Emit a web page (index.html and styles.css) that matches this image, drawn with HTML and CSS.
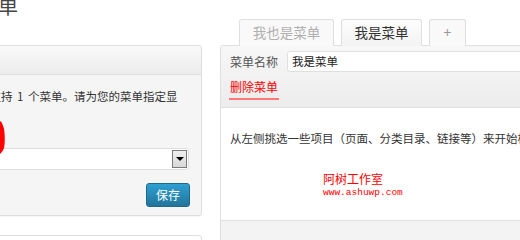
FILE: index.html
```html
<!DOCTYPE html>
<html lang="zh">
<head>
<meta charset="utf-8">
<link rel="stylesheet" href="styles.css">
</head>
<body>
<div class="wrap">
  <div class="left">
    <h1 class="title">编辑菜单</h1>
    <div class="panel">
      <div class="panel-head"></div>
      <div class="panel-body">
        <p class="desc">您的主题支持 <span class="num">1</span> 个菜单。请为您的菜单指定显</p>
        <div class="select"><span class="arrow"></span></div>
        <div class="actions"><button class="save">保存</button></div>
      </div>
    </div>
    <div class="panel next"></div>
  </div>
  <div class="right">
    <div class="tabs">
      <span class="tab">我也是菜单</span>
      <span class="tab active">我是菜单</span>
      <span class="tab plus">+</span>
    </div>
    <div class="menu">
      <div class="menu-head">
        <div class="name-row">
          <label class="name-label">菜单名称</label>
          <div class="name-input">我是菜单</div>
        </div>
        <a class="delete">删除菜单</a>
      </div>
      <div class="menu-body">
        <p class="hint">从左侧挑选一些项目（页面、分类目录、链接等）来开始构建您的自定义菜单。</p>
        <div class="mark">
          <div class="mark-name">阿树工作室</div>
          <div class="mark-url">www.ashuwp.com</div>
        </div>
      </div>
      <div class="menu-foot"></div>
    </div>
  </div>
</div>
<svg class="scribble" width="8" height="40" viewBox="0 0 8 40"><path d="M0 2 C2 3 3 6 4 10 C5 16 5 24 4 29 C3 32 1 34 0 35 Z" fill="#ff0000"/></svg>
</body>
</html>
```
FILE: styles.css
```css
html, body {
  margin: 0;
  padding: 0;
}
body {
  width: 520px;
  height: 240px;
  overflow: hidden;
  background: #fff;
  font-family: "Noto Sans CJK SC", "Noto Sans", sans-serif;
  color: #333;
  position: relative;
}
.wrap {
  display: flex;
  align-items: flex-start;
  gap: 18px;
  margin-left: -70px;
  width: 800px;
}
.left {
  width: 272px;
  flex: none;
}
.title {
  margin: -6px 0 27px 8px;
  height: 24px;
  font-size: 20px;
  line-height: 24px;
  font-weight: normal;
  color: #464646;
  white-space: nowrap;
}
.panel {
  border: 1px solid #dfdfdf;
  border-radius: 3px;
  background: #f5f5f5;
  box-shadow: 0 1px 1px rgba(0,0,0,0.04);
}
.panel-head {
  height: 28px;
  border-bottom: 1px solid #dfdfdf;
  background: linear-gradient(#f9f9f9, #ececec);
  border-radius: 3px 3px 0 0;
}
.panel-body {
  padding: 11px 12px 8px 12.5px;
}
.desc {
  margin: 0;
  font-size: 11.5px;
  line-height: 20px;
  white-space: nowrap;
  color: #333;
  overflow: hidden;
}
.num {
  padding: 0 2px;
}
.select {
  margin-top: 42px;
  height: 22px;
  box-sizing: border-box;
  border: 1px solid #dfdfdf;
  border-radius: 3px;
  background: #fff;
  display: flex;
  justify-content: flex-end;
  align-items: center;
  padding-right: 1px;
}
.arrow {
  width: 15px;
  height: 18px;
  box-sizing: border-box;
  border: 1px solid #7a7a7a;
  background: linear-gradient(#f0f0f0, #d8d8d8);
  display: flex;
  align-items: center;
  justify-content: center;
}
.arrow::after {
  content: "";
  border-left: 4px solid transparent;
  border-right: 4px solid transparent;
  border-top: 4px solid #000;
}
.actions {
  display: flex;
  justify-content: flex-end;
  margin-top: 13px;
}
.save {
  width: 44px;
  height: 24px;
  border: 1px solid #1e6a8d;
  border-radius: 3px;
  background: linear-gradient(#2e9fd2, #21759b);
  color: #fff;
  font-family: "Noto Sans CJK SC", sans-serif;
  font-size: 12px;
  line-height: 20px;
  padding: 0;
  margin-right: -1px;
}
.panel.next {
  margin-top: 19px;
  height: 40px;
  background: #fff;
}
.right {
  width: 400px;
  flex: none;
}
.tabs {
  display: flex;
  gap: 7px;
  padding: 19px 0 0 19px;
  height: 26px;
}
.tab {
  box-sizing: border-box;
  height: 27px;
  margin-bottom: -1px;
  border: 1px solid #dfdfdf;
  border-bottom: none;
  border-radius: 3px 3px 0 0;
  background: #f9f9f9;
  color: #b0b0b0;
  font-size: 13.5px;
  line-height: 25px;
  text-align: center;
  position: relative;
}
.tab:nth-child(1) { width: 95px; }
.tab.active {
  width: 81px;
  color: #333;
  background: linear-gradient(#fdfdfd, #f3f3f3);
  z-index: 1;
}
.tab.plus {
  width: 37px;
  color: #999;
  font-size: 14px;
}
.menu {
  border: 1px solid #dfdfdf;
  border-right: none;
  border-radius: 3px 0 0 0;
}
.menu-head {
  height: 61px;
  border-bottom: 1px solid #dfdfdf;
  background: linear-gradient(#f7f7f7, #ececec);
  padding-left: 9px;
}
.name-row {
  display: flex;
  align-items: center;
  gap: 11px;
  padding-top: 5px;
}
.name-label {
  font-size: 12px;
  line-height: 21px;
  color: #555;
  width: 46px;
  white-space: nowrap;
}
.name-input {
  flex: 1;
  height: 21px;
  box-sizing: border-box;
  border: 1px solid #e0e0e0;
  border-radius: 3px;
  background: #fff;
  font-size: 11.5px;
  line-height: 19px;
  padding-left: 4px;
  color: #222;
}
.delete {
  display: inline-block;
  margin-top: 7px;
  font-size: 12px;
  line-height: 16px;
  color: #ff0000;
  padding: 0 1px 3px 1px;
  border-bottom: 2px solid #f77;
  margin-left: -1px;
}
.menu-body {
  border-bottom: 1px solid #dfdfdf;
  background: #fff;
  padding: 20px 0 0 9px;
  box-sizing: border-box;
  height: 113px;
}
.hint {
  margin: 0;
  font-size: 11.5px;
  line-height: 20px;
  white-space: nowrap;
  color: #333;
}
.mark {
  margin: 24px 0 0 93px;
  color: #ff0000;
}
.mark-name {
  font-size: 12px;
  line-height: 14px;
}
.mark-url {
  font-family: "Liberation Mono", monospace;
  font-size: 9.5px;
  line-height: 12px;
  margin-top: 1px;
}
.menu-foot {
  height: 20px;
  background: #f3f3f3;
}
.scribble {
  position: absolute;
  left: 0;
  top: 119px;
}
```
